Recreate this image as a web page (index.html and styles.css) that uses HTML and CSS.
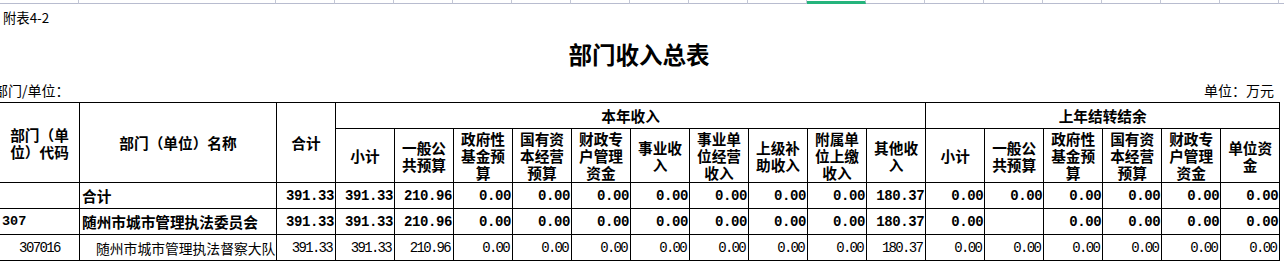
FILE: index.html
```html
<!DOCTYPE html>
<html lang="zh">
<head>
<meta charset="utf-8">
<title>部门收入总表</title>
<link rel="stylesheet" href="styles.css">
</head>
<body>
<div class="sheet">
  <div class="strip">
    <div class="tick w-code"></div><div class="tick w-name"></div>
    <div class="tick"></div><div class="tick"></div><div class="tick"></div><div class="tick"></div><div class="tick"></div><div class="tick"></div>
    <div class="tick"></div><div class="tick"></div><div class="tick"></div><div class="tick active"></div><div class="tick"></div><div class="tick"></div>
    <div class="tick"></div><div class="tick"></div><div class="tick"></div><div class="tick"></div><div class="tick"></div><div class="tick"></div>
  </div>
  <div class="caption">附表4-2</div>
  <h1 class="title">部门收入总表</h1>
  <div class="meta">
    <span class="meta-left">部门/单位：</span>
    <span class="meta-right">单位：万元</span>
  </div>
  <table class="report">
    <colgroup>
      <col class="c-code"><col class="c-name">
      <col class="c-num"><col class="c-num"><col class="c-num"><col class="c-num"><col class="c-num"><col class="c-num">
      <col class="c-num"><col class="c-num"><col class="c-num"><col class="c-num"><col class="c-num"><col class="c-num">
      <col class="c-num"><col class="c-num"><col class="c-num"><col class="c-num"><col class="c-num">
    </colgroup>
    <thead>
      <tr class="h1">
        <th rowspan="2">部门（单位）代码</th>
        <th rowspan="2">部门（单位）名称</th>
        <th rowspan="2">合计</th>
        <th colspan="10">本年收入</th>
        <th colspan="6">上年结转结余</th>
      </tr>
      <tr class="h2">
        <th>小计</th>
        <th>一般公共预算</th>
        <th>政府性基金预算</th>
        <th>国有资本经营预算</th>
        <th>财政专户管理资金</th>
        <th>事业收入</th>
        <th>事业单位经营收入</th>
        <th>上级补助收入</th>
        <th>附属单位上缴收入</th>
        <th>其他收入</th>
        <th>小计</th>
        <th>一般公共预算</th>
        <th>政府性基金预算</th>
        <th>国有资本经营预算</th>
        <th>财政专户管理资金</th>
        <th>单位资金</th>
      </tr>
    </thead>
    <tbody>
      <tr class="bold">
        <td class="code"></td><td class="name">合计</td>
        <td class="num">391.33</td><td class="num">391.33</td><td class="num">210.96</td>
        <td class="num">0.00</td><td class="num">0.00</td><td class="num">0.00</td><td class="num">0.00</td>
        <td class="num">0.00</td><td class="num">0.00</td><td class="num">0.00</td><td class="num">180.37</td>
        <td class="num">0.00</td><td class="num">0.00</td><td class="num">0.00</td><td class="num">0.00</td><td class="num">0.00</td><td class="num">0.00</td>
      </tr>
      <tr class="bold">
        <td class="code">307</td><td class="name">随州市城市管理执法委员会</td>
        <td class="num">391.33</td><td class="num">391.33</td><td class="num">210.96</td>
        <td class="num">0.00</td><td class="num">0.00</td><td class="num">0.00</td><td class="num">0.00</td>
        <td class="num">0.00</td><td class="num">0.00</td><td class="num">0.00</td><td class="num">180.37</td>
        <td class="num">0.00</td><td class="num"></td><td class="num">0.00</td><td class="num">0.00</td><td class="num">0.00</td><td class="num">0.00</td>
      </tr>
      <tr class="plain">
        <td class="code">307016</td><td class="name">随州市城市管理执法督察大队</td>
        <td class="num">391.33</td><td class="num">391.33</td><td class="num">210.96</td>
        <td class="num">0.00</td><td class="num">0.00</td><td class="num">0.00</td><td class="num">0.00</td>
        <td class="num">0.00</td><td class="num">0.00</td><td class="num">0.00</td><td class="num">180.37</td>
        <td class="num">0.00</td><td class="num">0.00</td><td class="num">0.00</td><td class="num">0.00</td><td class="num">0.00</td><td class="num">0.00</td>
      </tr>
    </tbody>
  </table>
</div>
</body>
</html>
```
FILE: styles.css
```css
html, body {
  margin: 0;
  padding: 0;
  background: #ffffff;
}

body {
  font-family: "Noto Sans CJK SC", "Liberation Sans", sans-serif;
  color: #000000;
  overflow: hidden;
}

.sheet {
  width: 1280px;
  margin-left: -1px;
}

/* spreadsheet column header remnant */
.strip {
  display: flex;
  height: 4px;
}

.tick {
  box-sizing: border-box;
  width: 59px;
  height: 4px;
  border-right: 1px solid #c3c7d6;
  border-bottom: 1px solid #b8bccf;
  flex: none;
}

.tick.w-code { width: 80px; }
.tick.w-name { width: 197px; }

.tick.active {
  border-bottom: 3px solid #25b47c;
  height: 4px;
}

.caption {
  margin-top: 6px;
  padding-left: 4px;
  font-size: 13.33px;
  line-height: 16px;
  height: 16px;
}

.title {
  margin: 13px 0 0;
  text-align: center;
  font-size: 23.5px;
  line-height: 30px;
  font-weight: 700;
}

.meta {
  display: flex;
  justify-content: space-between;
  margin-top: 12px;
  font-size: 14px;
  line-height: 18px;
  height: 18px;
  padding-right: 5px;
}

.meta-left {
  margin-left: -5px;
}

.report {
  margin-top: 3px;
  border-collapse: collapse;
  table-layout: fixed;
  width: 1279px;
}

.c-code { width: 80px; }
.c-name { width: 197px; }
.c-num { width: 59px; }

.report th,
.report td {
  border: 1px solid #000000;
  padding: 0;
  overflow: hidden;
}

.report th {
  font-size: 14.67px;
  font-weight: 700;
  line-height: 17px;
  text-align: center;
  vertical-align: middle;
  padding: 0 4px;
}

.report tr.h1 { height: 26px; }
.report tr.h2 { height: 54px; }

.report tbody tr { height: 26px; }

.report td {
  vertical-align: middle;
  white-space: nowrap;
}

.report td.num {
  text-align: right;
  font-family: "Liberation Mono", monospace;
}

.report tr.bold td {
  font-weight: 700;
}

.report tr.bold td.name {
  font-size: 14.67px;
  padding-left: 2px;
}

.report tr.bold td.code {
  font-family: "Liberation Mono", monospace;
  font-size: 13.5px;
  padding-left: 2px;
}

.report tr.bold td.num {
  font-size: 14px;
  letter-spacing: -0.4px;
  padding-right: 1px;
}

.report tr.plain td {
  font-weight: 400;
}

.report tr.plain td.code {
  text-align: center;
  font-family: "Liberation Mono", monospace;
  font-size: 14px;
  letter-spacing: -1.6px;
}

.report tr.plain td.name {
  font-size: 13.8px;
  padding-left: 16px;
}

.report tr.plain td.num {
  font-size: 14px;
  letter-spacing: -1.7px;
  padding-right: 3px;
}
```
